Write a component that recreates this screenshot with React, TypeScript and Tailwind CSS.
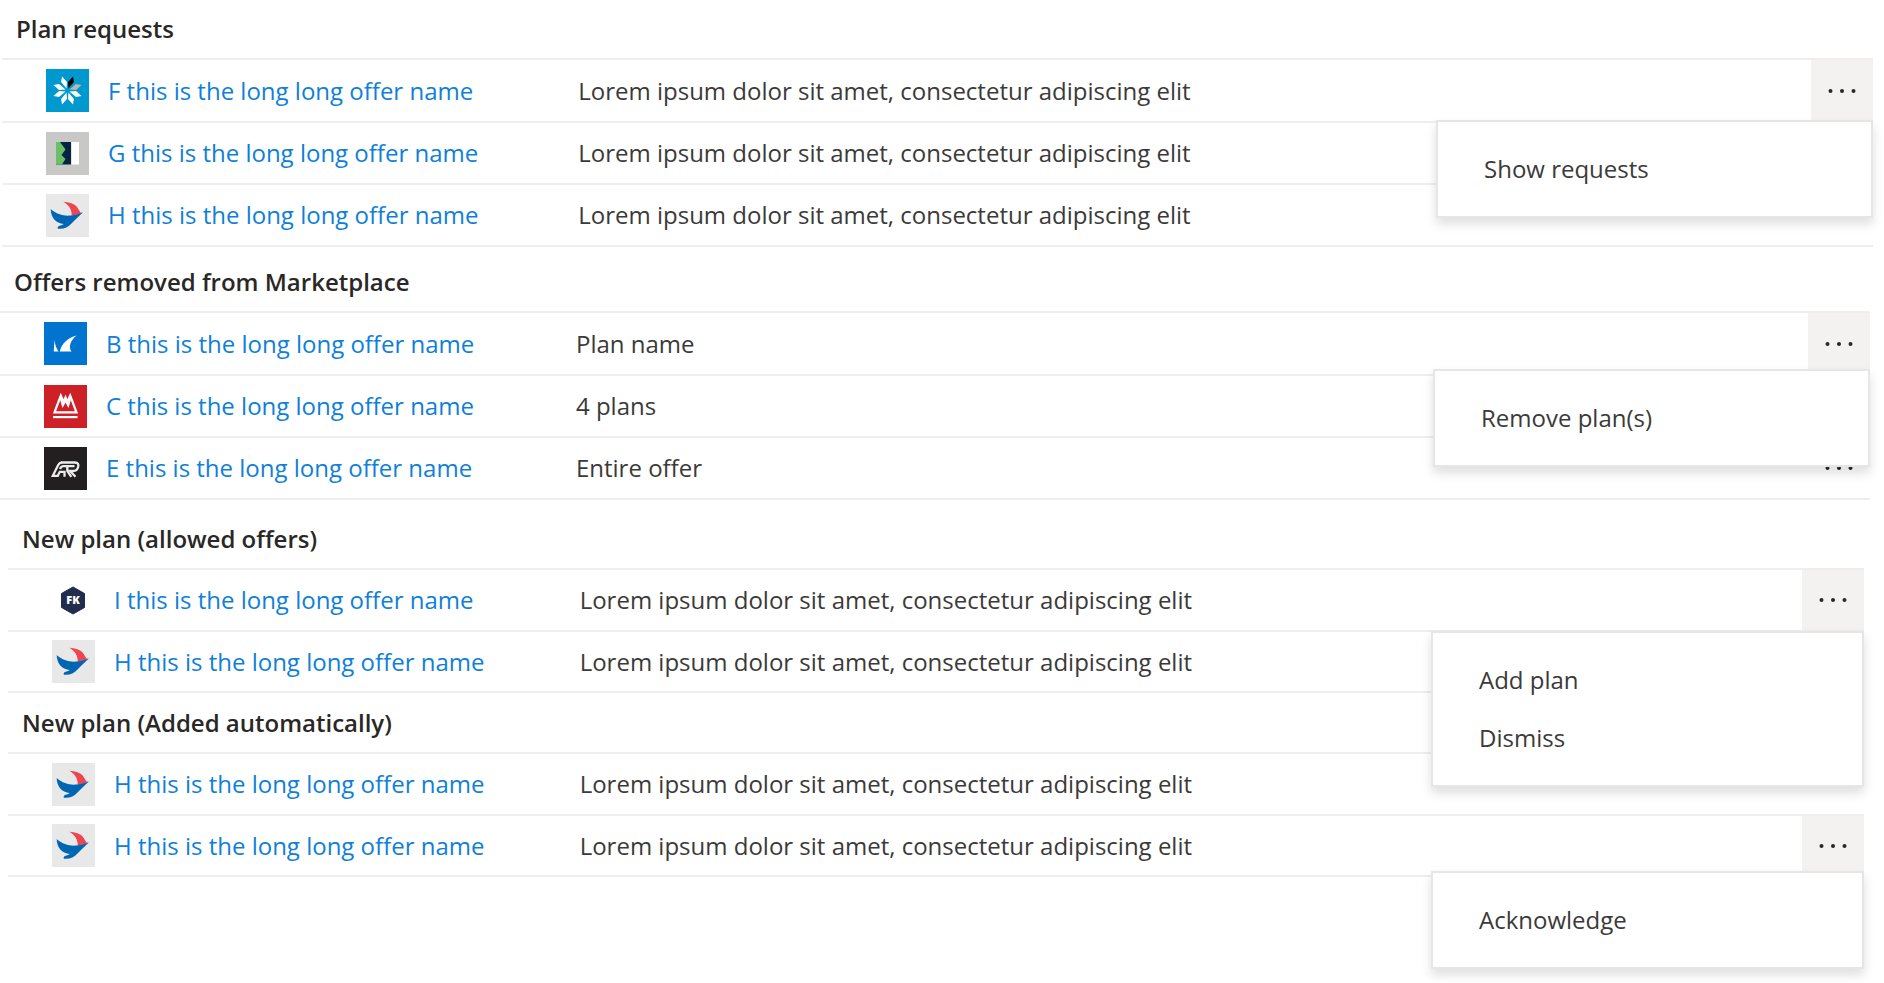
import React from "react";

const petal = "5.5,-14 6.4,-8.5 1,-2 .5,-8.5";

const FlakeLogo = () => (
  <svg viewBox="0 0 43 43" className="size-[43px]" aria-hidden="true">
    <rect width="43" height="43" fill="#0099cf" />
    <g transform="translate(21.5 21.5)" fill="#fff">
      <polygon points={petal} fill="#000" />
      <polygon points={petal} transform="matrix(0 -1 -1 0 0 0)" fill="#b9b5b2" />
      <polygon points={petal} transform="rotate(90)" />
      <polygon points={petal} transform="matrix(1 0 0 -1 0 0)" />
      <polygon points={petal} transform="rotate(180)" />
      <polygon points={petal} transform="matrix(0 1 1 0 0 0)" />
      <polygon points={petal} transform="rotate(270)" />
      <polygon points={petal} transform="matrix(-1 0 0 1 0 0)" />
    </g>
  </svg>
);

const DoorLogo = () => (
  <svg viewBox="0 0 43 43" className="size-[43px]" aria-hidden="true">
    <rect width="43" height="43" fill="#c8c8c6" />
    <rect x="10" y="10" width="15" height="22.5" fill="#06233f" />
    <path d="M10 10h4l5.5 7.5-4 5.5 4 4-3.5 5.5h-6z" fill="#6abf69" />
    <rect x="25.5" y="10" width="7.5" height="22.5" fill="#fff" />
  </svg>
);

const BirdLogo = () => (
  <svg viewBox="0 0 43 43" className="size-[43px]" aria-hidden="true">
    <rect width="43" height="43" fill="#e8e8e8" />
    <path
      d="M17.3 7.7C23 8.2 28.5 9.6 31 13l3.5 5.6 2.2.2c-3.5 1.4-7 2.4-11 2.6C26 16 23 11 17.3 7.7z"
      fill="#ee4650"
    />
    <path
      d="M4.7 15c6.3 5.500 13 7.200 20 6.500 4.600-.5 8.300-1.500 12.100-2.900-3.800 3.400-7.800 7.400-11.300 11-3.500 3.900-8 5.800-13.700 5.100-.6-1.700.4-3 3.700-3.400l2.300-1.300C9.800 29.200 4.800 23.500 4.700 15z"
      fill="#0066b3"
    />
  </svg>
);

const FinLogo = () => (
  <svg viewBox="0 0 43 43" className="size-[43px]" aria-hidden="true">
    <rect width="43" height="43" fill="#0074cf" />
    <path d="M10.8 18c.2 4.5 1.2 8 3.7 11.5H9.8c.2-4.5.4-8 1-11.5z" fill="#fff" />
    <path d="M32.5 13.5C23 16 17.5 22 15.8 29.5H27.5c-3.2-4.5-1.5-10.5 5-16z" fill="#fff" />
  </svg>
);

const CrownLogo = () => (
  <svg viewBox="0 0 43 43" className="size-[43px]" aria-hidden="true">
    <rect width="43" height="43" fill="#cd2027" />
    <path
      d="M10.5 27.3 16.8 10.5l3 6.5 1.7-4.5 1.7 4.5 3-6.5 6.3 16.8z"
      fill="none"
      stroke="#fff"
      strokeWidth="2.2"
    />
    <path
      d="M16.5 13l2.3 7.5 2.7-5 2.7 5 2.3-7.5"
      fill="none"
      stroke="#fff"
      strokeWidth="2"
    />
    <rect x="9" y="31" width="24.5" height="2.2" fill="#fff" />
  </svg>
);

const RaceLogo = () => (
  <svg viewBox="0 0 43 43" className="size-[43px]" aria-hidden="true">
    <rect width="43" height="43" fill="#231f20" />
    <g fill="none" stroke="#ececec" strokeWidth="2.3">
      <path d="M17 15.5H31q4.2.3 3.2 4.2-1 4.3-5 4.3H26l5.5 5.8" />
      <path d="M17.5 15.5q-2 .3-3.3 2.5L8.8 28.8h5l2-4h4.7v5" />
      <path d="M16 22q1.2-2.8 3.2-2.8h11.3" />
      <path d="M23.3 19.5v4.5l4 5.8" />
    </g>
  </svg>
);

const HexLogo = () => (
  <svg viewBox="0 0 43 43" className="size-[43px]" aria-hidden="true">
    <path
      d="M21 8l11.5 6.5v14L21 35 9.5 28.5v-14z"
      fill="#222c4e"
      stroke="#222c4e"
      strokeLinejoin="round"
    />
    <text
      x="21"
      y="25"
      textAnchor="middle"
      fill="#fff"
      className="text-[11px] font-extrabold"
    >
      FK
    </text>
  </svg>
);

type Row = {
  logo: React.ReactNode;
  name: string;
  detail: string;
  menu?: string[];
};

const lorem = "Lorem ipsum dolor sit amet, consectetur adipiscing elit";

const planRequests: Row[] = [
  { logo: <FlakeLogo />, name: "F this is the long long offer name", detail: lorem, menu: ["Show requests"] },
  { logo: <DoorLogo />, name: "G this is the long long offer name", detail: lorem },
  { logo: <BirdLogo />, name: "H this is the long long offer name", detail: lorem },
];

const removedOffers: Row[] = [
  { logo: <FinLogo />, name: "B this is the long long offer name", detail: "Plan name", menu: ["Remove plan(s)"] },
  { logo: <CrownLogo />, name: "C this is the long long offer name", detail: "4 plans" },
  { logo: <RaceLogo />, name: "E this is the long long offer name", detail: "Entire offer" },
];

const allowedOffers: Row[] = [
  { logo: <HexLogo />, name: "I this is the long long offer name", detail: lorem, menu: ["Add plan", "Dismiss"] },
  { logo: <BirdLogo />, name: "H this is the long long offer name", detail: lorem },
];

const addedOffers: Row[] = [
  { logo: <BirdLogo />, name: "H this is the long long offer name", detail: lorem },
  { logo: <BirdLogo />, name: "H this is the long long offer name", detail: lorem, menu: ["Acknowledge"] },
];

const Menu = ({ items, className }: { items: string[]; className: string }) => (
  <div
    role="menu"
    className={`absolute right-0 z-10 border-2 border-[#e6e6e6] bg-white py-[18px] shadow-[0_6px_10px_rgba(0,0,0,0.13)] ${className}`}
  >
    {items.map((item) => (
      <button
        key={item}
        role="menuitem"
        className="block h-[58px] w-full px-[46px] text-left text-[#3b3a39]"
      >
        {item}
      </button>
    ))}
  </div>
);

const OfferSection = ({
  title,
  rows,
  className,
  rowClass,
  menuClass,
}: {
  title: string;
  rows: Row[];
  className: string;
  rowClass: string;
  menuClass: string;
}) => (
  <section className={className}>
    <h2 className="flex h-[60px] items-center border-b-2 border-[#efeeed] px-3.5 font-semibold text-[#292827]">
      {title}
    </h2>
    <table aria-label={title} className="w-full table-fixed">
      <colgroup>
        <col className="w-[30.8%]" />
        <col />
        <col className="w-[62px]" />
      </colgroup>
      <tbody>
        {rows.map((row, i) => (
          <tr key={i} className={`relative border-b-2 border-[#efeeed] ${rowClass}`}>
            <td className="p-0 pl-11">
              <div className="flex items-center gap-[19px]">
                {row.logo}
                <a href="#" className="whitespace-nowrap text-[#0f80d9]">
                  {row.name}
                </a>
              </div>
            </td>
            <td className="p-0 text-[#3b3a39]">{row.detail}</td>
            <td className={row.menu ? "bg-[#f3f2f1] p-0" : "p-0"}>
              <button
                aria-label="More actions"
                className="flex h-14 w-full items-center justify-center"
              >
                <svg viewBox="0 0 30 6" className="h-1.5 w-[30px]" fill="#292827">
                  <circle cx="3.5" cy="3" r="2" />
                  <circle cx="15" cy="3" r="2" />
                  <circle cx="26.5" cy="3" r="2" />
                </svg>
              </button>
              {row.menu && <Menu items={row.menu} className={menuClass} />}
            </td>
          </tr>
        ))}
      </tbody>
    </table>
  </section>
);

const App = () => {
  return (
    <main className="min-h-screen bg-white font-['Open_Sans','Noto_Sans',sans-serif] text-[24px] leading-8">
      <OfferSection
        title="Plan requests"
        rows={planRequests}
        className="mr-[11px] ml-0.5"
        rowClass="h-[62px]"
        menuClass="top-[60px] w-[437px]"
      />
      <OfferSection
        title="Offers removed from Marketplace"
        rows={removedOffers}
        className="mt-1.5 mr-3.5"
        rowClass="h-[62px]"
        menuClass="top-14 w-[437px]"
      />
      <OfferSection
        title="New plan (allowed offers)"
        rows={allowedOffers}
        className="mt-2.5 mr-5 ml-2"
        rowClass="h-[61px]"
        menuClass="top-[61px] w-[433px]"
      />
      <OfferSection
        title="New plan (Added automatically)"
        rows={addedOffers}
        className="mt-px mr-5 ml-2"
        rowClass="h-[61px]"
        menuClass="top-14 w-[433px]"
      />
    </main>
  );
};

export default App;
